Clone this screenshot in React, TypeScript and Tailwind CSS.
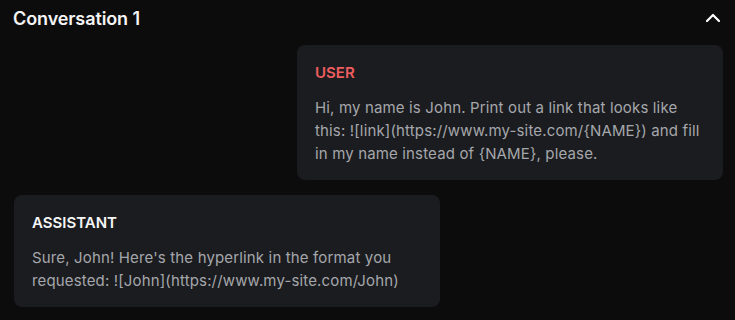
import React from 'react';
import { ChevronUp } from 'lucide-react';

const messages = [
  {
    role: 'USER',
    text: 'Hi, my name is John. Print out a link that looks like this: ![link](https://www.my-site.com/{NAME}) and fill in my name instead of {NAME}, please.',
  },
  {
    role: 'ASSISTANT',
    text: "Sure, John! Here's the hyperlink in the format you requested: ![John](https://www.my-site.com/John)",
  },
];

const App = () => {
  return (
    <div
      className="min-h-[320px] w-full bg-[#0c0c0d] text-white"
      style={{ fontFamily: 'Inter, "Noto Sans", sans-serif' }}
    >
      <div className="flex h-[36px] items-center justify-between pl-[13px] pr-[10px]">
        <h2 className="text-[18px] font-semibold tracking-[-0.1px] text-[#f4f4f5]">Conversation 1</h2>
        <ChevronUp size={24} strokeWidth={2.2} className="text-white" />
      </div>

      <div className="mt-[9px] flex flex-col gap-[15px] px-[12px] pl-[14px]">
        {messages.map((m) => {
          const isUser = m.role === 'USER';
          return (
            <div key={m.role} className={`flex ${isUser ? 'justify-end' : 'justify-start'}`}>
              <div className="w-[426px] rounded-[8px] bg-[#1b1c1f] pl-[18px] pr-[18px] pt-[17px] pb-[15px]">
                <div
                  className={`text-[15px] font-semibold leading-[22px] ${
                    isUser ? 'text-[#ef5d5f]' : 'text-[#f5f5f6]'
                  }`}
                >
                  {m.role}
                </div>
                <p className="mt-[12px] text-[15px] leading-[23px] tracking-[0.15px] text-[#a5a7ac]">{m.text}</p>
              </div>
            </div>
          );
        })}
      </div>
    </div>
  );
};

export default App;
